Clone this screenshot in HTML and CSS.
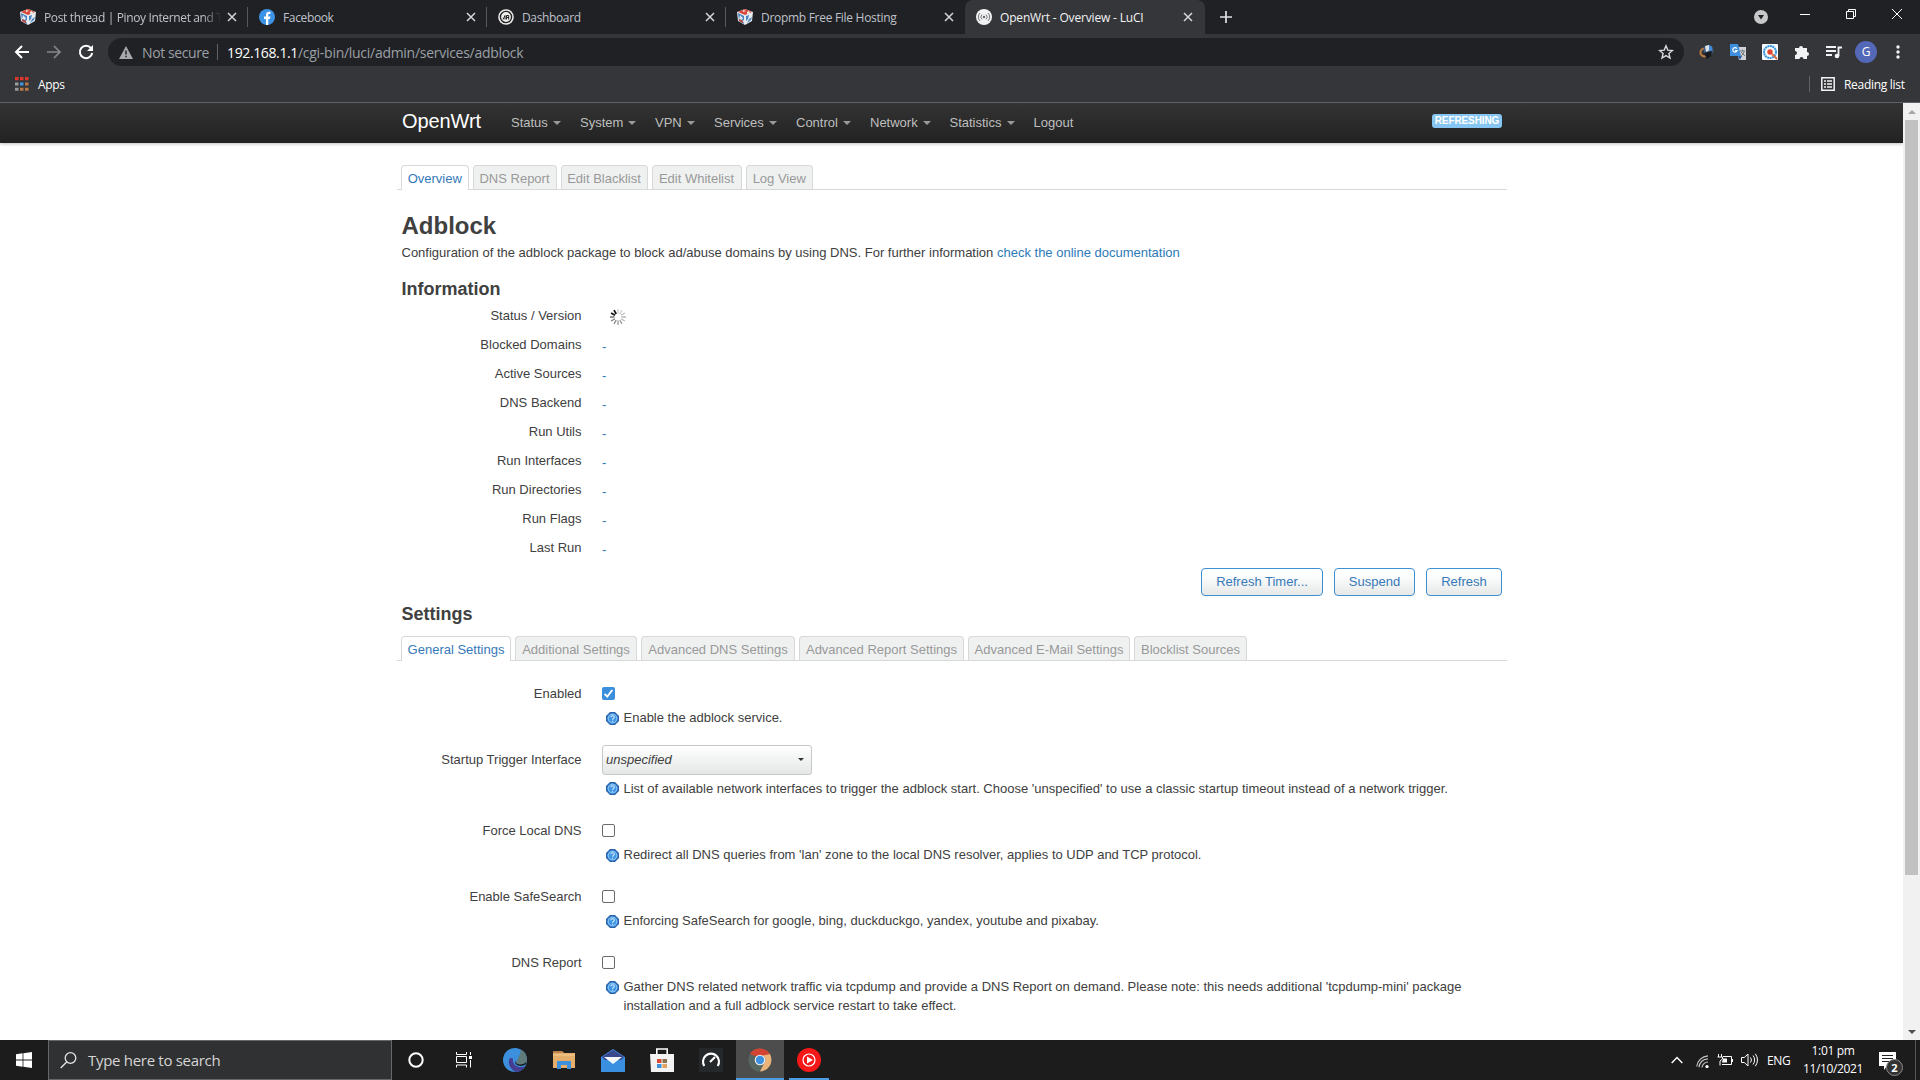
FILE: index.html
```html
<!DOCTYPE html>
<html lang="en">
<head>
<meta charset="utf-8">
<title>OpenWrt - Overview - LuCI</title>
<link rel="stylesheet" href="styles.css">
</head>
<body>
<svg width="0" height="0" class="defs">
  <symbol id="close" viewBox="0 0 10 10"><path d="M1 1l8 8M9 1l-8 8" stroke="currentColor" stroke-width="1.5" fill="none"/></symbol>
  <symbol id="cube" viewBox="0 0 16 16"><path d="M0 3l8-3 8 3-1 9-7 4-7-4z" fill="#e8ecf0"/><path d="M1 3l7-3 7 3-7 3z" fill="#d9483b"/><path d="M6 1l3 1-3 1zM10 3l2-1 1 2-3 1z" fill="#f3efe9"/><path d="M1 4l6 3v8l-5-3z" fill="#477fbc"/><path d="M3 6l3 3-1 2-3-1zM5 12l2 2v-3z" fill="#dce6ef"/><path d="M9 7l3-1-1 4-2 2zM12 10l3-2-1 3-4 3z" fill="#4a86c2"/><path d="M2 10l4 2v2l-4-2z" fill="#c74237"/></symbol>
  <symbol id="help" viewBox="0 0 13 13"><path d="M4 0h5l4 4v5l-4 4H4L0 9V4z" fill="#2b62ac"/><circle cx="6.5" cy="6.500" r="5.200" fill="#3f96e4"/><circle cx="6.5" cy="6.5" r="4.300" fill="none" stroke="#a9d4f7" stroke-width=".8"/><path d="M4.800 5.300c0-2 3.500-2 3.500 0 0 1.200-1.700 1.100-1.700 2.400M6.600 8.700v1.100" stroke="#d9ecfb" stroke-width="1.100" fill="none"/></symbol>
</svg>

<header class="browser">
  <div class="tabstrip">
    <div class="btab"><svg class="fav"><use href="#cube"/></svg><span class="btitle fade">Post thread | Pinoy Internet and T</span><svg class="x"><use href="#close"/></svg></div>
    <div class="btab"><svg class="fav" viewBox="0 0 16 16"><circle cx="8" cy="8" r="8" fill="#3d93e6"/><path d="M7 16v-6H5V7.6h2V6c0-2.2 1.2-3.2 3-3.2h1.4v2.1h-1c-.9 0-1.1.5-1.1 1.2v1.5h2.1L11 10H9.3v6z" fill="#fff"/></svg><span class="btitle">Facebook</span><svg class="x"><use href="#close"/></svg></div>
    <div class="btab"><svg class="fav" viewBox="0 0 16 16"><circle cx="8" cy="8" r="7.8" fill="#eee"/><circle cx="8" cy="8" r="5.600" fill="none" stroke="#222" stroke-width="1.400"/><path d="M5 10.500l2-4v4M8.500 10.500v-4h2.200v2H8.500h2.200v2" stroke="#222" fill="none"/></svg><span class="btitle">Dashboard</span><svg class="x"><use href="#close"/></svg></div>
    <div class="btab nosep"><svg class="fav"><use href="#cube"/></svg><span class="btitle wide">Dropmb Free File Hosting</span><svg class="x"><use href="#close"/></svg></div>
    <div class="btab active"><svg class="fav" viewBox="0 0 16 16"><circle cx="8" cy="8" r="8" fill="#f1f3f4"/><circle cx="8" cy="8" r="1.200" fill="#666"/><path d="M6 5.600a3.300 3.300 0 000 4.800M10 5.600a3.300 3.300 0 010 4.800M4 4a5.600 5.600 0 000 8M12 4a5.600 5.600 0 010 8" stroke="#777" fill="none"/></svg><span class="btitle">OpenWrt - Overview - LuCI</span><svg class="x"><use href="#close"/></svg></div>
    <svg class="plus" viewBox="0 0 12 12"><path d="M6 0v12M0 6h12" stroke="#dee1e6" stroke-width="1.700"/></svg>
    <div class="winctl">
      <svg width="14" height="14" viewBox="0 0 14 14"><circle cx="7" cy="7" r="7" fill="#c6c8ca"/><path d="M4 5h6L7 9.500z" fill="#202124"/></svg>
      <svg class="wb" width="10" height="10" viewBox="0 0 10 10"><path d="M0 5.500h10" stroke="#fff"/></svg>
      <svg class="wb" width="10" height="10" viewBox="0 0 10 10"><path d="M.5 2.500h7v7h-7zM2.500 2.500v-2h7v7h-2" stroke="#fff" fill="none"/></svg>
      <svg class="wb" width="10" height="10" viewBox="0 0 10 10"><path d="M0 0l10 10M10 0L0 10" stroke="#fff"/></svg>
    </div>
  </div>
  <div class="toolbar">
    <svg class="nav" viewBox="0 0 16 16"><path d="M15 8H2M8 2L2 8l6 6" stroke="#fff" stroke-width="2" fill="none"/></svg>
    <svg class="nav" viewBox="0 0 16 16"><path d="M1 8h13M8 2l6 6-6 6" stroke="#85878a" stroke-width="1.700" fill="none"/></svg>
    <svg class="nav" viewBox="0 0 16 16"><path d="M13 4.200A6.200 6.200 0 1014.200 9" stroke="#fff" stroke-width="2" fill="none"/><path d="M15 1v6H9z" fill="#fff"/></svg>
    <div class="omnibox">
      <svg width="14" height="13" viewBox="0 0 14 13"><path d="M7 0l7 13H0z" fill="#a6a8ab"/><path d="M7 4.500v4M7 9.700v1.500" stroke="#202124" stroke-width="1.500"/></svg>
      <span class="ns">Not secure</span><i></i><span class="url"><b>192.168.1.1</b>/cgi-bin/luci/admin/services/adblock</span>
      <svg class="star" viewBox="0 0 16 16"><path d="M8 1.800l1.800 4.300 4.600.4-3.500 3 1.100 4.500-4-2.400L4 14l1.100-4.500-3.500-3 4.600-.4z" stroke="#d8dade" stroke-width="1.400" fill="none"/></svg>
    </div>
    <div class="exts">
      <svg viewBox="0 0 16 16"><path d="M7 4.500a4 4 0 10-1 8l5-1" stroke="#b97c43" stroke-width="2" fill="none"/><circle cx="10.500" cy="6" r="5" fill="#3f5d80"/><path d="M7 2l4-1 1 5-4 2z" fill="#dae3ea"/><path d="M11 1l3 2v4l-3-1z" fill="#418bd8"/><path d="M6 9l8-2-1 5-4 3z" fill="#161a20"/></svg>
      <svg viewBox="0 0 16 16"><path d="M6 3h10v13H9z" fill="#cdd3d8"/><path d="M0 0h8l3 12H0z" fill="#3d8fe0"/><path d="M8 12h4l-2 4z" fill="#285fa4"/><path d="M6.800 4.600a2.200 2.200 0 10.300 2H5" stroke="#fff" fill="none" stroke-width="1.200"/><path d="M10 7h5M12.500 5.500V7M14 7c0 3-2 4-3 5M11 8l4 4" stroke="#777" fill="none"/></svg>
      <svg viewBox="0 0 16 16"><rect width="16" height="16" rx="1" fill="#f4fafd"/><circle cx="8" cy="8" r="6" fill="none" stroke="#3a94de" stroke-width="2" stroke-dasharray="2 .5"/><circle cx="8" cy="8" r="2.700" fill="#e0452f"/><path d="M10 10l5 5" stroke="#da6a3e" stroke-width="2"/></svg>
      <svg viewBox="0 0 16 16"><path d="M1 4h4a2 2 0 014 0h4v4a2 2 0 010 4v3H9.500a2 2 0 00-4 0H1v-4a2 2 0 000-4z" fill="#f1f3f4"/></svg>
      <svg viewBox="0 0 16 16"><path d="M0 3h10M0 7h10M0 11h6" stroke="#f1f3f4" stroke-width="1.800"/><path d="M12.500 12V3.500H16" stroke="#f1f3f4" stroke-width="1.800" fill="none"/><circle cx="11" cy="12" r="2.300" fill="#f1f3f4"/></svg>
      <span class="avatar">G</span>
      <svg viewBox="0 0 16 16" fill="#f1f3f4"><circle cx="8" cy="3" r="1.700"/><circle cx="8" cy="8" r="1.700"/><circle cx="8" cy="13" r="1.700"/></svg>
    </div>
  </div>
  <div class="bookmarks">
    <svg width="14" height="14" viewBox="0 0 14 14"><path d="M0 1.500h14" stroke="#e0372d" stroke-width="3.500" stroke-dasharray="3.500 1.500"/><path d="M0 7h3.500M0 12.300h3.500" stroke="#999b9d" stroke-width="3"/><path d="M5 7h3.500" stroke="#3d93e6" stroke-width="3"/><path d="M10 7h3.500M5 12.300h3.500M10 12.300h3.500" stroke="#b97a48" stroke-width="3"/></svg>
    <span class="apps">Apps</span>
    <div class="reading"><svg width="14" height="14" viewBox="0 0 14 14"><path d="M.8.8h12.400v12.400H.8z" stroke="#f1f3f4" stroke-width="1.500" fill="none"/><path d="M3 4h2M6 4h5M3 7h2M6 7h5M3 10h2M6 10h5" stroke="#f1f3f4" stroke-width="1.400"/></svg><span>Reading list</span></div>
  </div>
</header>

<div class="viewport">
  <div class="page">
    <nav class="topnav">
      <span class="brand">OpenWrt</span>
      <a class="menu m1">Status</a><a class="menu m2">System</a><a class="menu m3">VPN</a><a class="menu m4">Services</a><a class="menu m5">Control</a><a class="menu m6">Network</a><a class="menu m7">Statistics</a><a class="logout">Logout</a>
      <span class="badge">REFRESHING</span>
    </nav>
    <main>
      <div class="tabs"><a class="on w67">Overview</a><a class="w84">DNS Report</a><a class="w87">Edit Blacklist</a><a class="w90">Edit Whitelist</a><a class="w67">Log View</a></div>
      <h2>Adblock</h2>
      <p class="desc">Configuration of the adblock package to block ad/abuse domains by using DNS. For further information <a>check the online documentation</a></p>
      <h3 class="hinfo">Information</h3>
      <div class="info">
        <label>Status / Version</label><svg class="spin" viewBox="0 0 16 16" stroke-width="1.300"><path d="M8 0v4.500" stroke="#ccc"/><path d="M12 1.100L9.800 5" stroke="#ccc"/><path d="M14.900 4L11 6.200" stroke="#bbb"/><path d="M16 8h-4.500" stroke="#aaa"/><path d="M14.900 12L11 9.800" stroke="#bbb"/><path d="M12 14.900L9.800 11" stroke="#999"/><path d="M8 16v-4.500" stroke="#999"/><path d="M4 14.900L6.200 11" stroke="#888"/><path d="M1.100 12L5 9.800" stroke="#777"/><path d="M0 8h4.500" stroke="#555"/><path d="M1.100 4L5 6.200" stroke="#111" stroke-width="1.800"/><path d="M4 1.100L6.200 5" stroke="#111" stroke-width="1.800"/></svg>
        <label>Blocked Domains</label><span>-</span>
        <label>Active Sources</label><span>-</span>
        <label>DNS Backend</label><span>-</span>
        <label>Run Utils</label><span>-</span>
        <label>Run Interfaces</label><span>-</span>
        <label>Run Directories</label><span>-</span>
        <label>Run Flags</label><span>-</span>
        <label>Last Run</label><span>-</span>
      </div>
      <div class="buttons"><button class="b1">Refresh Timer...</button><button class="b2">Suspend</button><button class="b3">Refresh</button></div>
      <h3 class="hset">Settings</h3>
      <div class="tabs"><a class="on w110">General Settings</a><a class="w122">Additional Settings</a><a class="w154">Advanced DNS Settings</a><a class="w165">Advanced Report Settings</a><a class="w162">Advanced E-Mail Settings</a><a class="w113">Blocklist Sources</a></div>
      <div class="form">
        <div class="row"><label>Enabled</label><div class="ctl"><span class="check checked"><svg viewBox="0 0 13 13"><path d="M2.500 6.800l2.800 2.800 5-6.600" stroke="#fff" stroke-width="1.900" fill="none"/></svg></span><p class="tip"><svg><use href="#help"/></svg><span>Enable the adblock service.</span></p></div></div>
        <div class="row tall"><label>Startup Trigger Interface</label><div class="ctl"><div class="select"><em>unspecified</em><i></i></div><p class="tip"><svg><use href="#help"/></svg><span>List of available network interfaces to trigger the adblock start. Choose 'unspecified' to use a classic startup timeout instead of a network trigger.</span></p></div></div>
        <div class="row"><label>Force Local DNS</label><div class="ctl"><span class="check"></span><p class="tip"><svg><use href="#help"/></svg><span>Redirect all DNS queries from 'lan' zone to the local DNS resolver, applies to UDP and TCP protocol.</span></p></div></div>
        <div class="row"><label>Enable SafeSearch</label><div class="ctl"><span class="check"></span><p class="tip"><svg><use href="#help"/></svg><span>Enforcing SafeSearch for google, bing, duckduckgo, yandex, youtube and pixabay.</span></p></div></div>
        <div class="row"><label>DNS Report</label><div class="ctl"><span class="check"></span><p class="tip"><svg><use href="#help"/></svg><span>Gather DNS related network traffic via tcpdump and provide a DNS Report on demand. Please note: this needs additional 'tcpdump-mini' package<br>installation and a full adblock service restart to take effect.</span></p></div></div>
      </div>
    </main>
  </div>
  <div class="scrollbar"><i class="up"></i><div class="thumb"></div><i class="down"></i></div>
</div>

<footer class="taskbar">
  <div class="start"><svg width="16" height="16" viewBox="0 0 16 16"><path d="M0 2.200L6.600 1.300v6.200H0zM7.400 1.200L16 0v7.500H7.400zM0 8.400h6.600v6.300L0 13.800zM7.400 8.400H16V16l-8.600-1.200z" fill="#fff"/></svg></div>
  <div class="search"><svg width="17" height="17" viewBox="0 0 17 17"><circle cx="10.500" cy="6" r="5.300" stroke="#e4e4e4" stroke-width="1.300" fill="none"/><path d="M6.700 9.900L.7 16" stroke="#e4e4e4" stroke-width="1.400"/></svg><span>Type here to search</span></div>
  <div class="app"><svg width="16" height="16" viewBox="0 0 16 16"><circle cx="8" cy="8" r="6.700" fill="none" stroke="#fff" stroke-width="2"/></svg></div>
  <div class="app"><svg width="16" height="16" viewBox="0 0 16 16"><path d="M.5 0v2.500h10V0M.5 4.500h10v6H.5zM.5 15.500V13h10v2.500M14.500 0v3M14.500 8v7.500" stroke="#fff" fill="none"/><path d="M13 4h3v3h-3z" fill="#fff"/></svg></div>
  <div class="app edge"><svg width="24" height="24" viewBox="0 0 24 24"><circle cx="12" cy="12" r="12" fill="#3b8fdd"/><path d="M18 1.600A12 12 0 0124 12c0 3-3 5-6.500 5-3 0-5-1.500-4-4 2-3 4-7 4.500-11.400z" fill="#617a7a"/><path d="M7 10c-3 5 0 11 6 14 4-.5 7-2.500 9-5.500-7 2-13-1-12-8z" fill="#463c91"/><path d="M13 13c-.500 2 1 3.500 4 3.500 3 0 5-1 6.500-3l-.8 3c-3 2-8 2-10-.5-.7-1-.5-2.500.3-3z" fill="#1c1c1c"/></svg></div>
  <div class="app"><svg width="22" height="18" viewBox="0 0 22 18"><path d="M0 0h9l2 2h11v15H0z" fill="#e5ae6d"/><path d="M0 0h9l1 2H0z" fill="#bb814b"/><path d="M0 4h22" stroke="#f5cc93"/><path d="M4 18v-8h14v8h-4v-4H8v4z" fill="#3d91dc"/></svg></div>
  <div class="app"><svg width="24" height="23" viewBox="0 0 24 23"><path d="M0 8l12-8 12 8v15H0z" fill="#3b8fe0"/><path d="M1 8l11-7 11 7-3 3H4z" fill="#39478d"/><path d="M3 8h18l-9 7z" fill="#f5f8fa"/></svg></div>
  <div class="app"><svg width="24" height="24" viewBox="0 0 24 24"><path d="M6.800 7V1h10.400v6" fill="none" stroke="#fff" stroke-width="1.600"/><path d="M0 6h24v18H1z" fill="#f3f3f3"/><path d="M7 11h4.500v4H7z" fill="#d94b36"/><path d="M12.500 11H17v4h-4.500z" fill="#8c7251"/><path d="M7 16h4.500v4H7z" fill="#3d91d9"/><path d="M12.500 16H17v4h-4.500z" fill="#e1a35e"/></svg></div>
  <div class="app"><svg width="24" height="24" viewBox="0 0 24 24"><path d="M0 0h24v24H0z" fill="#25282b"/><path d="M5.300 18a8 8 0 1113.400 0M11 14l5-5" stroke="#fff" stroke-width="2.100" fill="none"/></svg></div>
  <div class="app current"><svg width="24" height="24" viewBox="0 0 24 24"><circle cx="12" cy="12" r="11.500" fill="#576760"/><path d="M2 6C4 2 8 .5 12 .5c4.500 0 8 2 10 5.500l-5 2H7z" fill="#d34432"/><path d="M22 6c4 8-1 17-10 17.500l5-10c1-2 0-5-2-6z" fill="#ecb479"/><circle cx="12" cy="12" r="5.300" fill="#f2f2f2"/><circle cx="12" cy="12" r="4.200" fill="#3c90df"/></svg></div>
  <div class="app running"><svg width="24" height="24" viewBox="0 0 24 24"><circle cx="12" cy="12" r="12" fill="#f51818"/><circle cx="12" cy="12" r="6" stroke="#fff" stroke-width="1.200" fill="none"/><path d="M10 8.500l6 3.500-6 3.500z" fill="#fff"/></svg></div>
  <div class="tray">
    <svg class="t1" width="12" height="8" viewBox="0 0 12 8"><path d="M.7 7L6 1.500 11.300 7" stroke="#fff" stroke-width="1.400" fill="none"/></svg>
    <svg class="t2" width="13" height="13" viewBox="0 0 13 13"><path d="M.7 11.500A12 12 0 0112 .8M3 12.300a9 9 0 019-8.500M6 12.500a6 6 0 016-5.500" stroke="#c7c7c7" stroke-width="1.200" fill="none"/><circle cx="11" cy="11.500" r="1.600" fill="#fff"/></svg>
    <svg class="t3" width="16" height="12" viewBox="0 0 16 12"><path d="M6 2.500h8.500v8H5M1.500 0v3M4.500 0v3M.5 3h5v2l-2.500 2v4.500M15.500 5v3" stroke="#fff" fill="none"/><path d="M6 4.500h4v4H5z" fill="#fff"/></svg>
    <svg class="t4" width="17" height="14" viewBox="0 0 17 14"><path d="M.5 4.500h2.800L7 1v12L3.300 9.500H.5zM9.500 4.500a4 4 0 010 5M12 2.500a7 7 0 010 9M14.300.8a10 10 0 010 12.400" stroke="#fff" fill="none"/></svg>
    <span class="lang">ENG</span>
    <div class="clock"><span>1:01 pm</span><span>11/10/2021</span></div>
    <div class="notif"><svg width="17" height="18" viewBox="0 0 17 18"><path d="M0 0h17v14H8l-3 4v-4H0z" fill="#fff"/><path d="M3 3.500h11M3 6.500h11M3 9.500h8" stroke="#222"/></svg><b>2</b></div>
  </div>
</footer>
</body>
</html>
```
FILE: styles.css
```css
* { box-sizing: border-box; }
body { margin: 0; width: 1920px; height: 1080px; overflow: hidden; display: flex; flex-direction: column; background: #fff; font-family: "Open Sans", "Noto Sans", sans-serif; }
svg { flex: none; display: block; }
.defs { position: absolute; }

/* browser chrome */
.browser { height: 103px; background: #35363a; border-bottom: 1px solid #606164; color: #e8eaed; font-size: 12px; }
.tabstrip { height: 34px; background: #202124; display: flex; padding-left: 9px; align-items: center; }
.btab { width: 239px; height: 34px; display: flex; align-items: center; padding: 0 10px 0 11px; background: linear-gradient(#56585b, #56585b) right center / 1px 20px no-repeat; color: #bfc1cb; }
.btab.nosep { background: none; }
.btab.active { background: #35363a; border-radius: 8px 8px 0 0; color: #f1f3f4; width: 240px; }
.fav { width: 16px; height: 16px; }
.btitle { flex: none; width: 177px; margin-left: 8px; white-space: nowrap; letter-spacing: -.36px; }
.btitle.wide { letter-spacing: -.29px; }
.active .btitle { letter-spacing: -.17px; }
.fade { -webkit-mask-image: linear-gradient(90deg, #000 90%, transparent); mask-image: linear-gradient(90deg, #000 90%, transparent); }
.x { width: 10px; height: 10px; margin-left: 6px; color: #d6d8db; }
.plus { width: 12px; height: 12px; margin-left: 15px; }
.winctl { margin-left: auto; margin-right: 18px; display: flex; align-items: center; }
.winctl .wb { margin: -6px 0 0 36px; }
.winctl .wb:nth-child(2) { margin-left: 32px; }
.toolbar { height: 36px; display: flex; align-items: center; padding: 0 14px; }
.nav { width: 16px; height: 16px; margin-right: 16px; }
.omnibox { width: 1576px; height: 28px; margin-left: -2px; border-radius: 14px; background: #202124; display: flex; align-items: center; padding: 0 10px 0 11px; font-size: 14px; color: #9aa0a6; white-space: nowrap; }
.omnibox i { width: 1px; height: 16px; background: #5f6368; margin-right: 9px; }
.ns { width: 67px; margin: 0 8px 0 9px; letter-spacing: -.4px; }
.url { letter-spacing: -.28px; }
.url b { font-weight: 400; color: #fff; letter-spacing: -.37px; }
.star { width: 16px; height: 16px; margin-left: auto; }
.exts { display: flex; align-items: center; gap: 16px; margin-left: 14px; }
.exts svg { width: 16px; height: 16px; }
.avatar { width: 22px; height: 22px; margin: 0 -3px; border-radius: 50%; background: #5468b8; color: #fff; text-align: center; line-height: 21px; font-size: 12px; }
.bookmarks { height: 28px; display: flex; align-items: center; padding: 0 15px; letter-spacing: -.3px; color: #fff; }
.apps { margin-left: 9px; }
.reading { margin-left: auto; height: 16px; border-left: 1px solid #606164; padding-left: 11px; display: flex; align-items: center; width: 96px; }
.reading span { margin-left: 9px; white-space: nowrap; }

/* router page */
.viewport { height: 937px; display: flex; }
.page { width: 1903px; overflow: hidden; font-family: "Liberation Sans", Arial, sans-serif; font-size: 13px; color: #404040; }
.topnav { height: 40px; background: linear-gradient(#333, #222); box-shadow: 0 1px 3px rgba(0,0,0,.25); padding-left: 402px; display: flex; align-items: center; color: #bfbfbf; line-height: 18px; }
.brand { flex: 0 0 109px; font-size: 20px; letter-spacing: -.1px; color: #fff; margin-top: -5px; }
.menu { display: flex; align-items: center; gap: 5px; }
.menu::after { content: ""; border: 4px solid transparent; border-top-color: #9a9a9a; border-bottom: 0; }
.m1 { width: 69px; } .m2 { width: 75px; } .m3 { width: 59px; } .m4 { width: 82px; } .m5 { width: 74px; } .m6 { width: 79.500px; } .m7 { width: 84px; }
.logout { width: 398.500px; }
.badge { width: 70px; height: 14px; margin-top: -4px; background: #87c6f2; border-radius: 3px; color: #fff; font-size: 10px; font-weight: 700; line-height: 14px; text-align: center; letter-spacing: -.1px; }
main { width: 1110px; margin-left: 397px; padding: 22px 0 0 5px; }
.tabs { height: 25px; margin-left: -5px; padding-left: 4px; display: flex; gap: 4px; border-bottom: 1px solid #d8d8d8; }
.tabs a { height: 24px; border: 1px solid #d8d8d8; border-bottom: 0; border-radius: 4px 4px 0 0; background: #eff1f1; color: #999; line-height: 25px; text-align: center; white-space: nowrap; }
.tabs a.on { height: 25px; background: #fff; color: #3779b8; }
.w67 { width: 67.500px; } .w84 { width: 84px; } .w87 { width: 87px; } .w90 { width: 90px; } .w110 { width: 110px; } .w122 { width: 122px; } .w154 { width: 154px; } .w165 { width: 165px; } .w162 { width: 162px; } .w113 { width: 113px; }
h2, h3, p { margin: 0; }
h2 { font-size: 24px; line-height: 36px; margin: 18px 0 0 -.5px; }
h3 { font-size: 18px; line-height: 36px; margin-left: -.5px; }
.desc { line-height: 18px; margin-left: -.5px; white-space: nowrap; }
.desc a { color: #2c7ab8; }
.hinfo { margin-top: 11px; line-height: 30px; padding-top: 1px; }
.info { display: grid; grid-template-columns: 180px 1fr; column-gap: 20px; grid-auto-rows: 29px; align-items: center; margin-top: -3px; }
.info label, .row label { text-align: right; padding-right: .5px; }
.info span { color: #2c7ab8; padding-top: 4px; }
.spin { width: 16px; height: 16px; margin: 2px 0 0 8px; }
.buttons { display: flex; justify-content: flex-end; gap: 11px; margin: 6px 5px 0 0; }
.buttons button { height: 28px; padding: 0 0 1px; border: 1px solid #3d8fd3; border-radius: 4px; background: linear-gradient(#fff 20%, #e6e8e8); font: 13px "Liberation Sans", Arial, sans-serif; color: #3779b8; }
.b1 { width: 122px; } .b2 { width: 81px; } .b3 { width: 76px; }
.hset { height: 40px; }
.form { padding-top: 23px; }
.row { height: 66px; display: grid; grid-template-columns: 180px 1fr; column-gap: 20px; line-height: 19px; }
.row.tall { height: 71px; }
.ctl { padding-top: 3px; }
.check { display: block; width: 13px; height: 13px; border: 1px solid #6b6b6b; border-radius: 2px; }
.check.checked { border: 0; background: #3a8edb; }
.tip { display: flex; gap: 4.500px; padding: 8px 0 0 4px; white-space: nowrap; }
.tip svg { width: 13px; height: 13px; margin-top: 4px; }
.select { width: 210px; height: 30px; margin-top: -8px; border: 1px solid #c6c8c8; border-radius: 3px; background: linear-gradient(#fff, #e5e7e7); display: flex; align-items: center; justify-content: space-between; padding: 0 7px 1px 3px; }
.select i { border: 3px solid transparent; border-top-color: #333; border-bottom: 0; }
.tall .tip { padding-top: 4px; }
.tall .tip svg { margin-top: 3px; }
.scrollbar { width: 17px; background: #f1f1f1; display: flex; flex-direction: column; align-items: center; padding: 7px 0 6px; }
.up, .down { border: 4px solid transparent; }
.up { border-top: 0; border-bottom-color: #a3a3a3; }
.down { border-bottom: 0; border-top-color: #505050; margin-top: auto; }
.thumb { width: 13px; height: 755px; background: #c1c1c1; margin-top: 6px; }

/* desktop taskbar */
.taskbar { height: 40px; background: #1c1c1c; display: flex; color: #fff; }
.start { width: 48px; display: flex; align-items: center; justify-content: center; }
.search { width: 344px; border: 1px solid #686868; background: #303132; display: flex; align-items: center; padding-left: 11px; font-size: 15px; color: #d5d5d5; }
.search span { margin-left: 11px; letter-spacing: -.3px; }
.app { width: 49.100px; display: flex; align-items: center; justify-content: center; }
.app:nth-child(3), .app:nth-child(4) { width: 48px; }
.app.edge { margin-left: 2.500px; }
.app.current { width: 48px; background: #4c4d4c; border-bottom: 2px solid #4b9ee2; padding-top: 2px; }
.app.running { width: 40px; margin-left: 5px; border-bottom: 2px solid #4b9ee2; padding-top: 2px; }
.tray { margin-left: auto; display: flex; align-items: center; width: 249px; }
.t2 { margin: 2px 0 0 13px; } .t3 { margin-left: 8px; } .t4 { margin-left: 8px; }
.lang { font-size: 12px; margin-left: 9px; width: 34px; letter-spacing: -.4px; }
.clock { width: 64px; display: flex; flex-direction: column; align-items: center; font-size: 12px; line-height: 18px; letter-spacing: -.35px; }
.notif { position: relative; margin-left: 14px; width: 37px; height: 40px; padding-top: 12px; border-right: 1px solid #555; }
.notif b { position: absolute; left: 7px; top: 19px; width: 17px; height: 17px; border: 1px solid #8b8b8b; border-radius: 50%; background: #333; font-size: 11px; line-height: 15px; text-align: center; }
```
